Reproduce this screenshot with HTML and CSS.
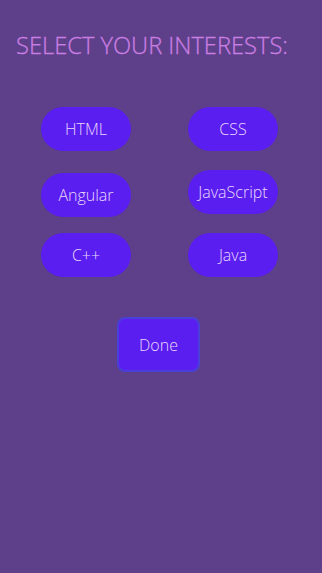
FILE: index.html
```html
<!DOCTYPE html>
<html lang="en">
<head>
    <meta charset="UTF-8">
    <meta name="viewport" content="width=device-width, initial-scale=1.0">
    <title>Select your interests</title>
    <link rel="stylesheet" href="styles.css">
</head>
<body>

<h1 class="title">SELECT YOUR INTERESTS:</h1>

<div class="choices">
    <div class="row">
        <button class="pill">HTML</button>
        <button class="pill">CSS</button>
    </div>
    <div class="row row-mid">
        <button class="pill">Angular</button>
        <button class="pill pill-up">JavaScript</button>
    </div>
    <div class="row">
        <button class="pill">C++</button>
        <button class="pill">Java</button>
    </div>
</div>

<div class="actions">
    <button class="done-btn">Done</button>
</div>

</body>
</html>
```

FILE: styles.css
```css
body {
    font-family: 'Open Sans', sans-serif;
    background-color: #5e3f8a;
    margin: 0;
    padding: 0;
}
.title {
    color: #c97ee2;
    font-size: 23.7px;
    font-weight: 300;
    line-height: 34px;
    margin: 0;
    padding: 28px 0 0 16px;
    -webkit-text-stroke: 0.3px #c97ee2;
}
.choices {
    padding: 45px 0 0 41px;
}
.row {
    display: flex;
    gap: 57px;
    align-items: flex-start;
    margin-bottom: 16px;
}
.row:first-child {
    margin-bottom: 22px;
}
.pill {
    width: 90px;
    height: 44px;
    padding: 0;
    background-color: #5b1ef0;
    color: #ead8ff;
    border: none;
    border-radius: 22px;
    font-family: 'Open Sans', sans-serif;
    font-weight: 300;
    font-size: 16px;
}
.pill-up {
    margin-top: -3px;
}
.actions {
    padding: 24px 0 0 117px;
}
.done-btn {
    width: 83px;
    height: 55px;
    padding: 0;
    background-color: #5b1ef0;
    color: #ead8ff;
    border: 2px solid #4a3fd6;
    border-radius: 8px;
    font-family: 'Open Sans', sans-serif;
    font-weight: 300;
    font-size: 16px;
}
```
